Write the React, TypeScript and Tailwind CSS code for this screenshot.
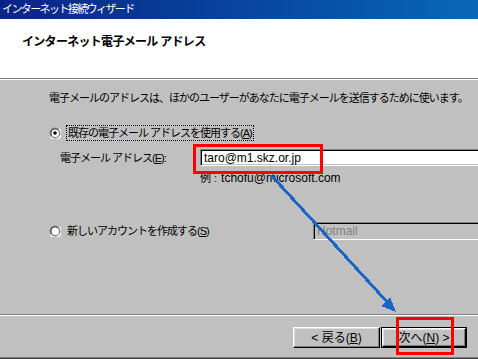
import React from "react";

const FONT = "font-['Liberation_Sans','Noto_Sans_CJK_JP',sans-serif]";

function Radio({ checked }: { checked?: boolean }) {
  return (
    <svg width="12" height="12" viewBox="0 0 12 12" className="shrink-0">
      <circle cx="6" cy="6" r="5.5" fill="#808080" />
      <path d="M1.5 9.5 A5.5 5.5 0 0 0 10.5 10.5 A5.5 5.5 0 0 0 10 2" fill="none" stroke="#fff" strokeWidth="1.2" />
      <circle cx="6" cy="6" r="4.3" fill="#000" />
      <circle cx="6.4" cy="6.4" r="3.9" fill="#dfdfdf" />
      <circle cx="6" cy="6" r="3.4" fill="#fff" />
      {checked && <circle cx="6" cy="6" r="1.8" fill="#000" />}
    </svg>
  );
}

const sunken =
  "border border-t-[#808080] border-l-[#808080] border-r-white border-b-white shadow-[inset_1px_1px_0_#000,inset_-1px_-1px_0_#c0c0c0]";
const raised =
  "border border-t-white border-l-white border-r-black border-b-black shadow-[inset_-1px_-1px_0_#808080,inset_1px_1px_0_#dfdfdf] bg-[#c0c0c0]";

export default function App() {
  return (
    <div className={`relative w-[478px] h-[359px] overflow-hidden bg-[#c0c0c0] flex flex-col text-black ${FONT}`}>
      {/* Title bar */}
      <header className="h-[19px] shrink-0 bg-blue-900">
        <div className="h-full flex items-center px-[2px] bg-linear-to-r from-[#0a2386] via-[#0844a0] to-[#0a68b8]">
          <span className="text-white text-[11px] tracking-[-1.6px] leading-none">インターネット接続ウィザード</span>
        </div>
      </header>

      {/* Header */}
      <div className="h-[59px] shrink-0 bg-white pl-[22px] pt-[10px]">
        <span className="text-[12px] font-bold tracking-[-0.7px] leading-[14px]">インターネット電子メール アドレス</span>
      </div>
      <div className="h-[2px] shrink-0 border-t border-t-[#808080] border-b border-b-white" />

      {/* Body */}
      <div className="flex-1 flex flex-col text-[11px] tracking-[-1px] leading-[14px]">
        <p className="mt-[11px] pl-[49px] whitespace-nowrap">
          電子メールのアドレスは、ほかのユーザーがあなたに電子メールを送信するために使います。
        </p>

        <div className="mt-[20px] h-[16px] pl-[49px] flex items-center gap-[5px]">
          <Radio checked />
          <span className="shrink-0 border border-dotted border-black px-[1px] leading-[14px] whitespace-nowrap">
            既存の電子メール アドレスを使用する(<span className="underline">A</span>)
          </span>
        </div>

        <div className="mt-[8px] h-[17px] pl-[60px] flex items-center">
          <span className="shrink-0 w-[140px] whitespace-nowrap">
            電子メール アドレス(<span className="underline">E</span>):
          </span>
          <div className={`shrink-0 w-[290px] h-[17px] bg-white ${sunken} flex items-center pl-[3px] text-[12px] tracking-normal`}>
            taro@m1.skz.or.jp
          </div>
        </div>

        <p className="mt-[5px] pl-[200px] whitespace-nowrap flex items-center">
          <span>例</span>
          <span className="ml-[4px] mr-[4px] tracking-normal">:</span>
          <span className="text-[12px] tracking-normal">tchofu@microsoft.com</span>
        </p>

        <div className="mt-[37px] h-[18px] pl-[49px] flex items-center">
          <Radio />
          <span className="shrink-0 ml-[6px] w-[246px] whitespace-nowrap">
            新しいアカウントを作成する(<span className="underline">S</span>)
          </span>
          <div className={`shrink-0 w-[200px] h-[18px] ${sunken} flex items-center pl-[3px] text-[12px] tracking-normal text-[#808080]`}>
            Hotmail
          </div>
        </div>

        <div className="flex-1" />
        <div className="h-[2px] border-t border-t-[#808080] border-b border-b-white" />

        <div className="mt-[11px] mb-[9px] h-[21px] pl-[293px] flex tracking-normal">
          <button className={`shrink-0 w-[87px] h-[21px] ${raised} flex items-center justify-center text-[12px]`}>
            &lt; 戻る(<span className="underline">B</span>)
          </button>
          <div className="shrink-0 ml-[1px] w-[86px] h-[21px] border border-black">
            <div className={`w-full h-full ${raised} flex items-center justify-center text-[12px]`}>
              次へ(<span className="underline">N</span>) &gt;
            </div>
          </div>
        </div>
        <div className="h-[2px] border-t border-t-[#808080] border-b border-b-[#404040]" />
      </div>

      {/* Annotations */}
      <div className="absolute left-[193px] top-[144px] w-[130px] h-[30px] border-[3px] border-[#ff0000]" />
      <div className="absolute left-[396px] top-[317px] w-[58px] h-[38px] border-[3px] border-[#ff0000]" />
      <svg className="absolute left-[260px] top-[170px]" width="140" height="150" viewBox="260 170 140 150" shapeRendering="crispEdges">
        <line x1="271" y1="175" x2="389" y2="304" stroke="#1a66c8" strokeWidth="3" />
        <polygon points="396,312 381,306 390,297" fill="#1a66c8" />
      </svg>
    </div>
  );
}
